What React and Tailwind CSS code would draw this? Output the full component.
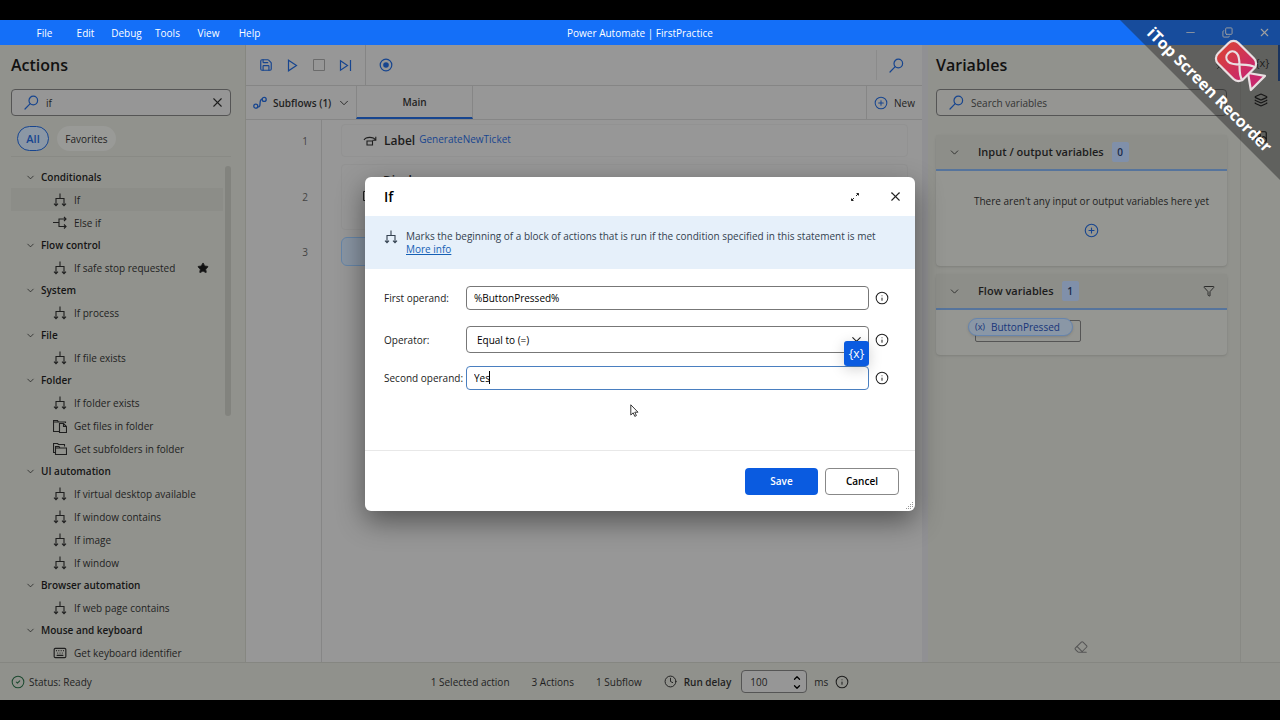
import React, { useState } from 'react';
import {
    X, ChevronDown, ChevronUp, Save, Play, Square, CirclePlus, Info, Star, Keyboard,
    Clock, Filter, Eraser, Layers, Copy, Minus, CircleCheck, Pin, Image as ImageIcon,
} from 'lucide-react';

const GROUPS = [
    { name: 'Conditionals', items: [['If', 'branch'], ['Else if', 'else']] },
    { name: 'Flow control', items: [['If safe stop requested', 'branch']] },
    { name: 'System', items: [['If process', 'branch']] },
    { name: 'File', items: [['If file exists', 'branch']] },
    { name: 'Folder', items: [['If folder exists', 'branch'], ['Get files in folder', 'files'], ['Get subfolders in folder', 'folders']] },
    { name: 'UI automation', items: [['If virtual desktop available', 'branch'], ['If window contains', 'branch'], ['If image', 'branch'], ['If window', 'branch']] },
    { name: 'Browser automation', items: [['If web page contains', 'branch']] },
    { name: 'Mouse and keyboard', items: [['Get keyboard identifier', 'keyboard']] },
];

const MENU = ['File', 'Edit', 'Debug', 'Tools', 'View', 'Help'];

const BranchIcon = () => (
    <svg width="14" height="14" viewBox="0 0 14 14" fill="none" stroke="currentColor" strokeWidth="1.1" className="shrink-0">
        <path d="M7 0.5V5.5M3 12.5V5.5H11V12.5M1 10.6L3 12.8L5 10.6M9 10.6L11 12.8L13 10.6" />
    </svg>
);

const ElseIcon = () => (
    <svg width="14" height="14" viewBox="0 0 14 14" fill="none" stroke="currentColor" strokeWidth="1.1" className="shrink-0">
        <path d="M0 6.5H6M13 3H6V10.5H13M11 1L13 3L11 5M11 8.5L13 10.5L11 12.5" />
    </svg>
);

const FilesIcon = () => (
    <svg width="14" height="14" viewBox="0 0 14 14" fill="none" stroke="currentColor" strokeWidth="1.1" className="shrink-0">
        <path d="M6 12.5H0.5V1.5H4.5L5.5 3H12.5V4M0.5 3H5.5M6.5 4.5H10.5L13.5 7.5V13.5H6.5ZM10.5 4.5V7.5H13.5" />
    </svg>
);

const FoldersIcon = () => (
    <svg width="14" height="14" viewBox="0 0 14 14" fill="none" stroke="currentColor" strokeWidth="1.1" className="shrink-0">
        <path d="M2.5 10.5H0.5V1.5H4.5L5.5 2.5H11.5V4.5M2.5 12.5V4.5H6L7 6H13.5V12.5ZM2.5 6H7" />
    </svg>
);

const ActionIcon = ({ kind }) => {
    if (kind === 'else') return <ElseIcon />;
    if (kind === 'files') return <FilesIcon />;
    if (kind === 'folders') return <FoldersIcon />;
    if (kind === 'keyboard') return <Keyboard size={14} strokeWidth={2} className="shrink-0" />;
    return <BranchIcon />;
};

const SearchIcon = () => (
    <svg width="15" height="15" viewBox="0 0 15 15" fill="none" stroke="currentColor" strokeWidth="1.2" strokeLinecap="round" className="shrink-0 text-[#17458f]">
        <circle cx="9.3" cy="5.5" r="4.3" />
        <path d="M6.2 8.7L1 14" />
    </svg>
);

const SubflowIcon = () => (
    <svg width="14" height="14" viewBox="0 0 14 14" fill="none" stroke="currentColor" strokeWidth="1.3">
        <circle cx="2.8" cy="10.2" r="2" />
        <circle cx="11.2" cy="3.4" r="2" />
        <path d="M4.8 10.8C9 11.5 5.2 3.2 9.2 3.2" />
    </svg>
);

const LabelIcon = () => (
    <svg width="14" height="14" viewBox="0 0 14 14" fill="none" stroke="currentColor" strokeWidth="1.1">
        <path d="M1 6C3 2.5 10.5 2.5 12.5 6M12.8 2.8V6.2H9.6M4 7H9.5V11H4Z" />
    </svg>
);

const TitleBar = () => (
    <header className="grid h-[25px] shrink-0 grid-cols-[1fr_auto_1fr] items-center bg-[#146ff8] font-medium text-white">
        <nav className="flex items-center pl-6">
            {MENU.map((m) => (
                <button key={m} className="w-[41px] text-center">{m}</button>
            ))}
        </nav>
        <h1>Power Automate | FirstPractice</h1>
        <div className="flex items-center justify-end gap-[25px] pr-[9px]">
            <button aria-label="Minimize"><Minus size={13} strokeWidth={1.5} /></button>
            <button aria-label="Restore"><Copy size={11} strokeWidth={2} className="-scale-y-100" /></button>
            <button aria-label="Close"><X size={13} strokeWidth={2} /></button>
        </div>
    </header>
);

const ActionsPanel = () => {
    const [query, setQuery] = useState('if');

    return (
        <aside className="flex w-[246px] shrink-0 flex-col border-r border-[#868781] bg-[#91928d]">
            <h2 className="px-[11px] pt-2 text-[16px] leading-6 font-semibold text-[#111]">Actions</h2>
            <div className="mt-3 mr-[14px] ml-[11px] flex h-[27px] shrink-0 items-center gap-[7px] rounded border border-[#555] bg-[#969696] px-3">
                <SearchIcon />
                <input aria-label="Search actions" value={query} onChange={(e) => setQuery(e.target.value)} className="min-w-0 flex-1 outline-none" />
                <button aria-label="Clear" onClick={() => setQuery('')} className="-mr-[7px]"><X size={15} strokeWidth={1.75} /></button>
            </div>
            <div className="mt-[10px] flex gap-2 px-[17px]">
                <button className="h-[25px] w-8 rounded-full border border-[#17458f] bg-[#8b97a5] text-[11px] font-semibold text-[#17458f]">All</button>
                <button className="h-[25px] w-[59px] rounded-full bg-[#999a97]">Favorites</button>
            </div>
            <div className="mt-[5px] mr-[14px] ml-[11px] flex min-h-0 flex-1 overflow-hidden border-t border-[#898a85] pt-[9px]">
                <div className="min-w-0 flex-1">
                    {GROUPS.map((group) => (
                        <section key={group.name}>
                            <h3 className="flex h-[22px] items-center gap-[5px] pl-[14px] font-semibold text-[#151515]">
                                <ChevronDown size={11} strokeWidth={1.5} />
                                {group.name}
                            </h3>
                            <ul>
                                {group.items.map(([name, kind]) => (
                                    <li key={name} className={`flex h-[23px] items-center gap-[7px] pl-[42px] ${name === 'If' ? 'bg-[#8c8d88]' : ''}`}>
                                        <ActionIcon kind={kind} />
                                        <span className="flex-1 whitespace-nowrap">{name}</span>
                                        {name === 'If safe stop requested' && <Star size={12} className="mr-[14px] fill-[#111]" />}
                                    </li>
                                ))}
                            </ul>
                        </section>
                    ))}
                </div>
                <div className="ml-[2px] h-[250px] w-[6px] rounded-full bg-[#82837e]" />
            </div>
        </aside>
    );
};

const Designer = () => (
    <main className="flex min-w-0 flex-1 flex-col bg-[#979797]">
        <div className="flex h-[41px] shrink-0 items-center border-b border-[#858585] text-[#17458f]">
            <div className="flex h-full items-center gap-[13px] border-r border-[#858585] px-[13px]">
                <button aria-label="Save"><Save size={14} strokeWidth={2} /></button>
                <button aria-label="Run">
                    <svg width="13" height="13" viewBox="0 0 13 13" fill="none" stroke="currentColor" strokeWidth="1.2">
                        <path d="M2.5 1.2L10.5 6.5L2.5 11.8Z" />
                    </svg>
                </button>
                <button aria-label="Stop" className="text-[#6b6b6b]">
                    <svg width="14" height="14" viewBox="0 0 14 14" fill="none" stroke="currentColor">
                        <path d="M1.5 1.5H12.5V12.5H1.5Z" />
                    </svg>
                </button>
                <button aria-label="Run next action">
                    <svg width="13" height="13" viewBox="0 0 13 13" fill="none" stroke="currentColor" strokeWidth="1.2">
                        <path d="M1.5 1.8L8.5 6.5L1.5 11.2ZM11.5 1V12" />
                    </svg>
                </button>
            </div>
            <button aria-label="Recorder" className="ml-[13px]">
                <svg width="14" height="14" viewBox="0 0 14 14" fill="none" stroke="currentColor" strokeWidth="1.2">
                    <circle cx="7" cy="7" r="5.8" />
                    <circle cx="7" cy="7" r="2.8" fill="currentColor" stroke="none" />
                </svg>
            </button>
            <button aria-label="Search in flow" className="ml-auto flex h-[30px] items-center border-l border-[#8b8b8b] pr-[18px] pl-3">
                <SearchIcon />
            </button>
        </div>
        <div className="flex h-[34px] shrink-0 items-stretch border-b border-[#868686] font-semibold">
            <button className="flex w-[110px] items-center gap-[6px] pl-[7px] whitespace-nowrap">
                <span className="text-[#17458f]"><SubflowIcon /></span>
                Subflows (1)
                <ChevronDown size={14} strokeWidth={1.5} />
            </button>
            <button className="w-[117px] border-r border-b-2 border-l border-r-[#868686] border-b-[#17458f] border-l-[#868686]">Main</button>
            <button className="ml-auto flex items-center gap-[6px] border-l border-[#868686] px-[7px] font-medium">
                <CirclePlus size={14} strokeWidth={1.75} className="text-[#17458f]" />
                New
            </button>
        </div>
        <div className="flex flex-1">
            <div className="flex w-[76px] flex-col items-end gap-[7px] border-r border-[#868686] pt-1 pr-[13px] text-[#444]">
                <span className="flex h-[33px] items-center">1</span>
                <span className="flex h-[66px] items-center">2</span>
                <span className="flex h-[29px] items-center">3</span>
            </div>
            <div className="flex flex-1 flex-col gap-[7px] pt-1 pr-[14px] pl-[19px]">
                <div className="flex h-[33px] items-center gap-[7px] rounded border border-[#929292] pl-[21px]">
                    <LabelIcon />
                    <span className="text-[12px] font-semibold text-[#1c1c1c]">Label</span>
                    <span className="-ml-[3px] pb-[3px] text-[#17458f]">GenerateNewTicket</span>
                </div>
                <div className="flex h-[66px] gap-[7px] rounded border border-[#929292] pt-2 pl-[20px]">
                    <svg width="14" height="14" viewBox="0 0 14 14" fill="none" stroke="currentColor" className="mt-[17px]">
                        <path d="M1.5 1.5H13.5V10.5H6L4 13V10.5H1.5Z" />
                    </svg>
                    <span className="text-[12px] font-semibold text-[#1c1c1c]">Display message</span>
                </div>
                <div className="h-[29px] rounded-md border border-[#6585a8] bg-[#8995a3]" />
            </div>
        </div>
    </main>
);

const Card = ({ title, count, action, children }) => (
    <section className="rounded-sm bg-[#959692] shadow-sm">
        <header className="flex h-9 items-center border-b-2 border-[#56749c] bg-[#8d8e89] px-3">
            <ChevronDown size={13} strokeWidth={1.5} />
            <h3 className="ml-[17px] text-[11px] font-semibold text-[#1c1c1c]">{title}</h3>
            <span className="ml-2 flex h-5 w-[17px] items-center justify-center rounded-xs bg-[#8090aa] font-semibold text-[#1b2a48]">{count}</span>
            {action}
        </header>
        {children}
    </section>
);

const VariablesPanel = () => (
    <aside className="flex w-[319px] shrink-0 flex-col border-r border-l-[6px] border-r-[#888984] border-l-[#909093] bg-[#91928d] pr-[13px] pl-2">
        <div className="flex items-center justify-between pt-2">
            <h2 className="text-[16px] leading-6 font-semibold text-[#111]">Variables</h2>
            <button aria-label="Pin panel"><Pin size={12} strokeWidth={1.5} className="rotate-45" /></button>
        </div>
        <label className="mt-3 flex h-[27px] items-center gap-[7px] rounded border border-[#555] bg-[#959592] px-3">
            <SearchIcon />
            <input aria-label="Search variables" placeholder="Search variables" className="min-w-0 flex-1 outline-none placeholder:text-[#333]" />
        </label>
        <div className="mt-[19px] flex flex-col gap-2">
            <Card title="Input / output variables" count="0">
                <div className="flex h-[95px] flex-col items-center gap-[14px] pt-[22px] pl-5">
                    <p className="font-medium whitespace-nowrap">There aren't any input or output variables here yet</p>
                    <button aria-label="Add variable" className="text-[#17458f]"><CirclePlus size={15} strokeWidth={1.75} /></button>
                </div>
            </Card>
            <Card title="Flow variables" count="1" action={<button aria-label="Filter" className="ml-auto"><Filter size={12} strokeWidth={1.75} /></button>}>
                <div className="flex h-[45px] items-start pt-[10px] pl-[39px]">
                    <div className="relative h-[22px] w-[106px] rounded-xs border border-[#555]">
                        <span className="absolute -top-[3px] -left-[8px] flex h-[18px] items-center gap-[6px] rounded-full border border-[#6785ad] bg-[#8a97a6] px-[6px] pr-3 font-medium text-[#17357a] shadow">
                            <span className="text-[9px]">(x)</span>
                            ButtonPressed
                        </span>
                    </div>
                </div>
            </Card>
        </div>
        <button aria-label="Clear values" className="mt-auto mb-2 self-center pr-[2px] text-[#555]"><Eraser size={14} strokeWidth={1.75} /></button>
    </aside>
);

const Rail = () => (
    <aside className="flex w-[39px] shrink-0 flex-col items-end bg-[#92938e]">
        <button className="h-9 w-full border-r-2 border-[#17458f] pl-[6px] text-[11px]">{'{x}'}</button>
        <button aria-label="UI elements" className="flex h-[37px] w-full items-center justify-center text-[#111]"><Layers size={14} strokeWidth={2} /></button>
        <button aria-label="Images" className="flex h-[37px] w-full items-center justify-center text-[#111]"><ImageIcon size={14} strokeWidth={2} /></button>
    </aside>
);

const StatusBar = () => (
    <footer className="grid h-[38px] shrink-0 grid-cols-[1fr_auto_1fr] items-center border-t border-[#858681] bg-[#90918c]">
        <span className="flex items-center gap-1 pl-[11px]">
            <CircleCheck size={14} strokeWidth={1.75} className="text-[#1c4a30]" />
            Status: Ready
        </span>
        <div className="flex items-center gap-[22px]">
            <span>1 Selected action</span>
            <span>3 Actions</span>
            <span>1 Subflow</span>
            <div className="flex items-center gap-[7px]">
                <Clock size={13} strokeWidth={1.75} />
                <label htmlFor="delay" className="font-semibold">Run delay</label>
                <div className="ml-[3px] flex h-[23px] w-[66px] items-center rounded border border-[#555] bg-[#969696] pr-1 pl-2">
                    <input id="delay" defaultValue="100" className="w-0 min-w-0 flex-1 outline-none" />
                    <span className="flex flex-col text-black">
                        <button aria-label="Increase" className="h-[9px]"><ChevronUp size={10} strokeWidth={3} /></button>
                        <button aria-label="Decrease" className="h-[9px]"><ChevronDown size={10} strokeWidth={3} /></button>
                    </span>
                </div>
                <span>ms</span>
                <Info size={14} strokeWidth={1.75} />
            </div>
        </div>
    </footer>
);

const Field = ({ id, label, className = '', children }) => (
    <div className={`flex items-center ${className}`}>
        <label htmlFor={id} className="w-[82px] shrink-0 whitespace-nowrap">{label}</label>
        <div className="relative flex-1">{children}</div>
        <button aria-label={`About ${label}`} className="ml-[6px]"><Info size={14} strokeWidth={1.75} /></button>
    </div>
);

const IfDialog = () => {
    const [second, setSecond] = useState('Yes');

    return (
        <div role="dialog" aria-label="If" className="relative flex w-[550px] flex-col rounded-md bg-white text-[#222] shadow-[0_10px_28px_rgba(0,0,0,0.45)]">
            <header className="flex h-[39px] items-center pr-3 pl-[19px]">
                <h2 className="flex-1 text-[14px] font-semibold text-black">If</h2>
                <button aria-label="Expand" className="mr-[28px]">
                    <svg width="10" height="10" viewBox="0 0 10 10" fill="none" stroke="currentColor" strokeWidth="1">
                        <path d="M6.5 1.5H8.5V3.5M3.5 8.5H1.5V6.5" />
                        <path d="M8.5 1.5L1.5 8.5" strokeDasharray="3.5 2.9" />
                    </svg>
                </button>
                <button aria-label="Close dialog"><X size={15} strokeWidth={1.75} /></button>
            </header>
            <div className="flex h-[53px] gap-2 bg-[#e6f0fa] px-[19px] pt-[14px] text-[#33414f]">
                <BranchIcon />
                <p className="leading-[13px]">
                    Marks the beginning of a block of actions that is run if the condition specified in this statement is met<br />
                    <a href="#more" className="text-[#1560b5] underline">More info</a>
                </p>
            </div>
            <div className="h-[181px] pt-[17px] pr-[26px] pl-[19px]">
                <Field id="first" label="First operand:">
                    <input id="first" defaultValue="%ButtonPressed%" className="block h-6 w-full rounded border border-[#777] px-[7px] font-medium text-black outline-none" />
                </Field>
                <Field id="operator" label="Operator:" className="mt-4">
                    <select id="operator" className="block h-[27px] w-full appearance-none rounded border border-[#777] bg-white px-[10px] font-medium text-black outline-none">
                        <option>Equal to (=)</option>
                    </select>
                    <ChevronDown size={15} strokeWidth={1.75} className="pointer-events-none absolute top-[6px] right-[5px]" />
                    <button className="absolute top-[15px] right-0 z-10 h-[25px] w-[25px] rounded-[3px] bg-[#0a5be0] text-[12px] font-medium text-white shadow-[0_3px_14px_rgba(0,0,0,0.18)]">{'{x}'}</button>
                </Field>
                <Field id="second" label="Second operand:" className="mt-[13px]">
                    <input id="second" value={second} onChange={(e) => setSecond(e.target.value)} className="block h-6 w-full rounded border border-[#4a7fc0] px-[7px] font-medium text-black outline-none" />
                    <span className="absolute top-[5px] left-[23px] h-[13px] w-px bg-black" />
                </Field>
            </div>
            <footer className="flex h-[61px] items-center justify-end gap-[7px] border-t border-[#e8e8e8] pr-4">
                <button className="h-[27px] w-[73px] rounded bg-[#0a5be0] font-semibold text-white">Save</button>
                <button className="h-[27px] w-[74px] rounded border border-[#888] font-semibold text-black">Cancel</button>
            </footer>
            <svg width="10" height="10" viewBox="0 0 10 10" className="absolute right-0 bottom-0 fill-[#999]">
                <path d="M7 1h1v1h-1zM5 3h1v1h-1zM7 3h1v1h-1zM3 5h1v1h-1zM5 5h1v1h-1zM7 5h1v1h-1zM1 7h1v1h-1zM3 7h1v1h-1zM5 7h1v1h-1z" />
            </svg>
            <svg width="9" height="14" viewBox="0 0 9 14" className="absolute top-[227px] left-[265px] fill-white stroke-[#222]">
                <path d="M0.8 0.8V11L3.2 8.8L4.8 12.4L6.4 11.6L4.8 8.2H8Z" strokeWidth="0.9" />
            </svg>
        </div>
    );
};

const RecorderRibbon = () => (
    <svg width="160" height="160" viewBox="0 0 160 160" className="pointer-events-none absolute top-5 right-0 z-30">
        <defs>
            <linearGradient id="cam" x1="0" y1="0" x2="1" y2="0">
                <stop offset="0" stopColor="#d8403c" />
                <stop offset="1" stopColor="#c9286c" />
            </linearGradient>
        </defs>
        <path d="M0 0H160V160Z" fill="#1c1c1c" fillOpacity="0.42" />
        <text transform="translate(26 14) rotate(45)" fill="#fff" fontSize="16" fontWeight="700" className="font-['Open_Sans',sans-serif]">iTop Screen Recorder</text>
        <g transform="translate(116 41) rotate(45)" stroke="#e9dfe2" strokeWidth="2.2" strokeLinejoin="round" strokeLinecap="round">
            <path d="M17 0L31 -10V10Z" fill="#c9286c" />
            <rect x="-18" y="-14.5" width="36" height="29" rx="7" fill="url(#cam)" />
            <path d="M18 -9C9 -8 3 6 -5 6C-13 6 -13 -6 -5 -6C3 -6 9 8 18 9" fill="none" />
        </g>
    </svg>
);

export default function App() {
    return (
        <div className="relative flex h-screen flex-col overflow-hidden bg-black py-5 font-['Open_Sans','Noto_Sans',sans-serif] text-[10px] leading-4 text-[#1f1f1f]">
            <TitleBar />
            <div className="relative flex min-h-0 flex-1">
                <ActionsPanel />
                <Designer />
                <VariablesPanel />
                <Rail />
                <div className="absolute inset-0 z-20 flex items-start justify-center pt-[132px]">
                    <IfDialog />
                </div>
            </div>
            <StatusBar />
            <RecorderRibbon />
        </div>
    );
}
